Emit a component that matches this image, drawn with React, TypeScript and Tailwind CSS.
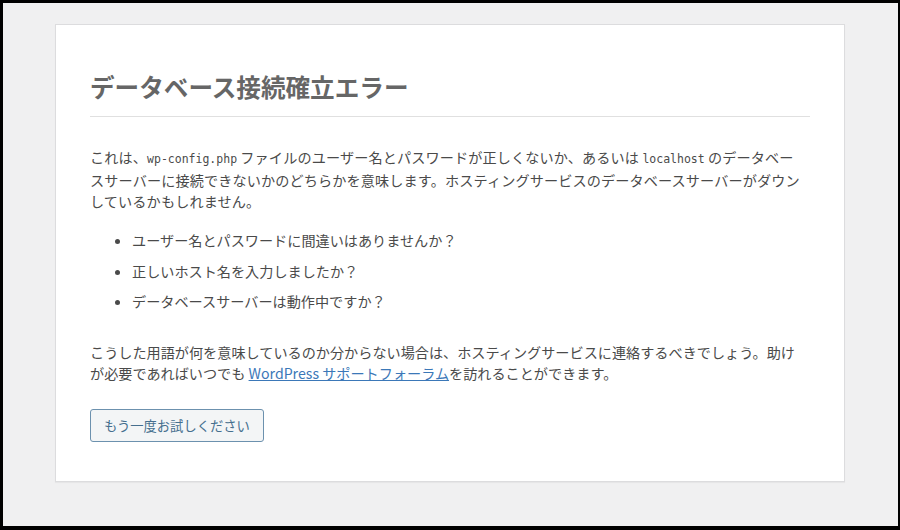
export default function App() {
  return (
    <div
      className="box-border h-[530px] w-[900px] overflow-hidden border-b-[4px] border-l-[3px] border-r-[2px] border-t-[3px] border-black bg-[#f0f0f1] text-[#4a4a4a]"
      style={{ fontFamily: '"Noto Sans CJK JP", "Noto Sans", sans-serif' }}
    >
      <div className="ml-[52px] mt-[21px] w-[790px] border border-[#dcdcde] bg-white px-[34px] pb-[39px] pt-[46px] shadow-[0_1px_1px_rgba(0,0,0,0.04)]">
        <h1 className="border-b border-[#e0e0e0] pb-[15px] text-[24.6px] font-bold leading-[30px] text-[#666]">
          データベース接続確立エラー
        </h1>

        <p className="mt-[30px] text-[14.15px] leading-[21px] tracking-[0.12px]">
          これは、<code className="font-['DejaVu_Sans_Mono',monospace] text-[11.5px] tracking-normal">wp-config.php</code> ファイルのユーザー名とパスワードが正しくないか、あるいは{" "}
          <code className="font-['DejaVu_Sans_Mono',monospace] text-[11.5px] tracking-normal">localhost</code> のデータベー
          <br />
          スサーバーに接続できないかのどちらかを意味します。ホスティングサービスのデータベースサーバーがダウン
          <br />
          しているかもしれません。
        </p>

        <ul className="mt-[18px] list-disc pl-[42px] text-[14.15px] leading-[21px]">
          <li className="mb-[9.5px]">ユーザー名とパスワードに間違いはありませんか？</li>
          <li className="mb-[9.5px]">正しいホスト名を入力しましたか？</li>
          <li className="mb-[9.5px]">データベースサーバーは動作中ですか？</li>
        </ul>

        <p className="mt-[30px] text-[14.15px] leading-[21px]">
          こうした用語が何を意味しているのか分からない場合は、ホスティングサービスに連絡するべきでしょう。助け
          <br />
          が必要であればいつでも{" "}
          <a href="#" className="text-[#3b78b8] underline">
            WordPress サポートフォーラム
          </a>
          を訪れることができます。
        </p>

        <div className="mt-[25px] flex">
          <button
            type="button"
            className="h-[33px] rounded-[3px] border border-[#6c91ae] bg-[#f3f5f6] px-[13px] text-[13.3px] text-[#456f8e]"
          >
            もう一度お試しください
          </button>
        </div>
      </div>
    </div>
  );
}
